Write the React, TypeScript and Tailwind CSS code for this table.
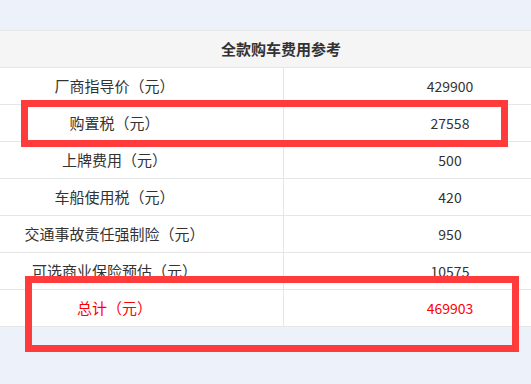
const rows: { label: string; value: string; total?: boolean }[] = [
  { label: '厂商指导价（元）', value: '429900' },
  { label: '购置税（元）', value: '27558' },
  { label: '上牌费用（元）', value: '500' },
  { label: '车船使用税（元）', value: '420' },
  { label: '交通事故责任强制险（元）', value: '950' },
  { label: '可选商业保险预估（元）', value: '10575' },
  { label: '总计（元）', value: '469903', total: true },
];

export default function App() {
  return (
    <div
      className="relative h-screen w-full overflow-hidden bg-[#edf1f9] pt-[30px]"
      style={{ fontFamily: '"Noto Sans CJK SC", "Noto Sans", sans-serif' }}
    >
      <div className="ml-[-54px] w-[670px] border-t border-[#e6e6e6] bg-white">
        <div className="flex h-[37px] items-center justify-center border-b border-[#e6e6e6] bg-[#f5f5f5] text-[15px] font-bold text-[#333]">
          全款购车费用参考
        </div>
        {rows.map((r) => (
          <div key={r.label} className="grid h-[37px] grid-cols-[338px_332px] border-b border-[#e6e6e6]">
            <div
              className={`flex items-center justify-center border-r border-[#e6e6e6] text-[15px] ${
                r.total ? 'text-[#ff0000]' : 'text-[#333]'
              }`}
            >
              {r.label}
            </div>
            <div
              className={`flex items-center justify-center text-[14px] ${
                r.total ? 'text-[#ff0000]' : 'text-[#333]'
              }`}
            >
              {r.value}
            </div>
          </div>
        ))}
      </div>

      {/* annotation boxes */}
      <div className="absolute left-[21px] top-[100px] h-[47px] w-[487px] border-[7px] border-[#ff3b3b]" />
      <div className="absolute left-[25px] top-[276px] h-[76px] w-[494px] border-[7px] border-[#ff3b3b]" />
    </div>
  );
}
